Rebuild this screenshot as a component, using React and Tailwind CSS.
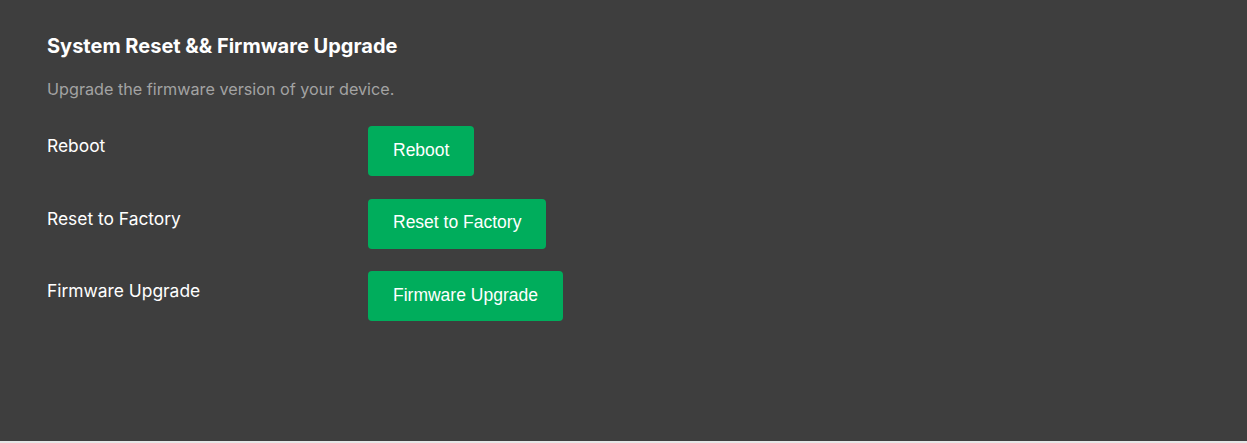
export default function App() {
  const rows = ["Reboot", "Reset to Factory", "Firmware Upgrade"];
  return (
    <div className="w-[1247px] h-[443px] bg-[#e6e6e6] flex flex-col">
      <div className="h-[441px] bg-[#3e3e3e] px-[47px] pt-[32px]" style={{ fontFamily: "Inter, 'Liberation Sans', sans-serif" }}>
        <h1 className="text-[20px] leading-[28px] font-bold text-white">System Reset &amp;&amp; Firmware Upgrade</h1>
        <p className="mt-[17px] text-[16.2px] leading-[24px] text-[#a3a3a3]">Upgrade the firmware version of your device.</p>
        <div className="mt-[25px] flex flex-col gap-[22.5px]">
          {rows.map((r) => (
            <div key={r} className="flex items-start">
              <div className="w-[321px] pt-[8px] text-[17.4px] leading-[24px] text-white">{r}</div>
              <button
                className="h-[50px] px-[25px] pb-[2px] rounded-[4px] bg-[#00ad5c] text-white text-[17.5px]"
                style={{ fontFamily: "'Liberation Sans', Arial, sans-serif" }}
              >
                {r}
              </button>
            </div>
          ))}
        </div>
      </div>
    </div>
  );
}
